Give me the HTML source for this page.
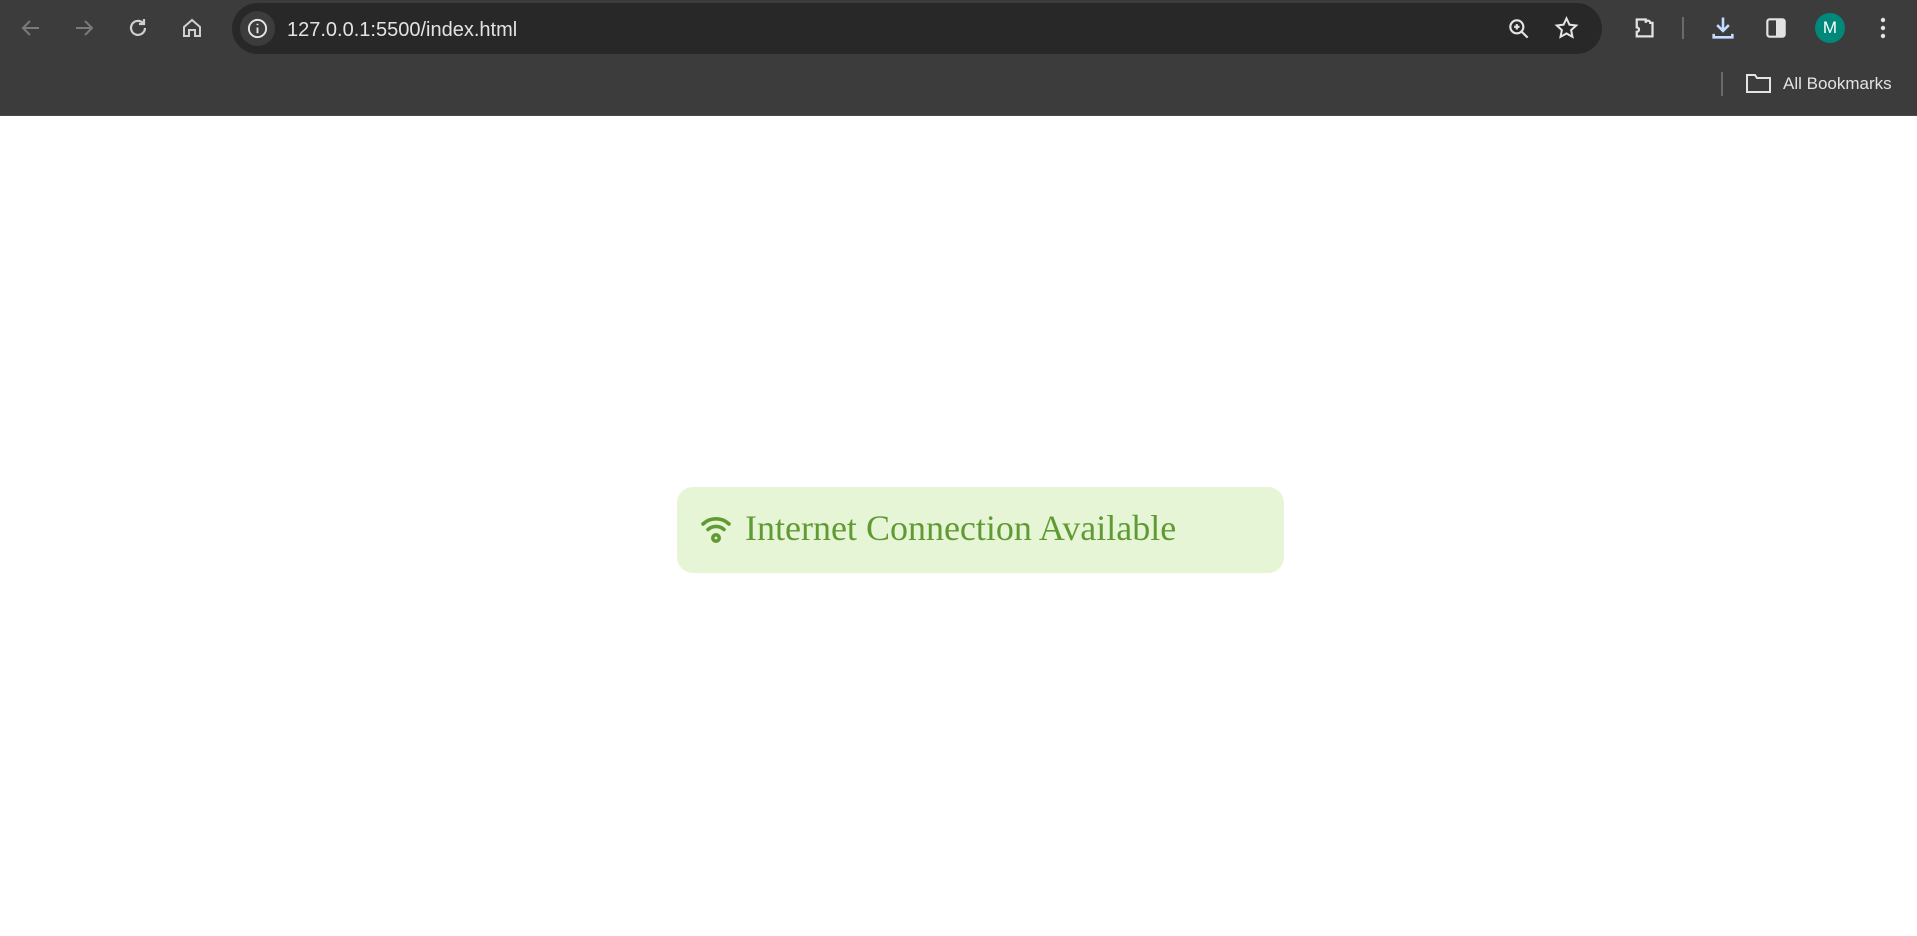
<!DOCTYPE html>
<html><head><meta charset="utf-8"><style>
html,body{margin:0;padding:0;width:1917px;height:936px;overflow:hidden;background:#fff;font-family:"Liberation Sans",sans-serif}
.chrome{position:absolute;left:0;top:0;width:1917px;height:116px;background:#3c3c3c;border-bottom:1px solid #4a4a4a;box-sizing:border-box}
.omni{position:absolute;left:232px;top:3px;width:1370px;height:51px;background:#282828;border-radius:26px}
.info{position:absolute;left:240px;top:11px;width:35px;height:35px;border-radius:50%;background:#3c3c3c}
.url{position:absolute;left:287px;top:19px;font-size:20px;color:#e3e3e3}
.ico{position:absolute}
.bm{position:absolute;left:1783px;top:74px;font-size:17px;color:#e3e3e3}
.box{position:absolute;left:677px;top:487px;width:607px;height:86px;background:#e7f5d7;border-radius:16px}
.txt{position:absolute;left:745px;top:507px;font-family:"Liberation Serif",serif;font-size:36px;color:#5f9b32;white-space:nowrap}
</style></head><body>
<div class="chrome">
<svg class="ico" style="left:19px;top:16px" width="24" height="24" viewBox="0 0 24 24" fill="none" stroke="#7a7a7a" stroke-width="2"><path d="M20 12H5M11 5l-7 7 7 7"/></svg>
<svg class="ico" style="left:72px;top:16px" width="24" height="24" viewBox="0 0 24 24" fill="none" stroke="#7a7a7a" stroke-width="2"><path d="M4 12h15M13 5l7 7-7 7"/></svg>
<svg class="ico" style="left:126px;top:16px" width="24" height="24" viewBox="0 0 24 24" fill="none" stroke="#d0d0d0" stroke-width="2.2"><path d="M19 12a7 7 0 1 1-2-5"/><path d="M18 3v5h-5" /></svg>
<svg class="ico" style="left:180px;top:16px" width="24" height="24" viewBox="0 0 24 24" fill="none" stroke="#d0d0d0" stroke-width="2"><path d="M4 11l8-7 8 7v9h-5v-6H9v6H4z"/></svg>
<div class="omni"></div>
<div class="info"></div>
<svg class="ico" style="left:246px;top:17px" width="23" height="23" viewBox="0 0 24 24" fill="none" stroke="#e3e3e3" stroke-width="2"><circle cx="12" cy="12" r="9"/><path d="M12 11v6M12 7v1.5"/></svg>
<div class="url">127.0.0.1:5500/index.html</div>
<svg class="ico" style="left:1506px;top:16px" width="26" height="26" viewBox="0 0 24 24" fill="none" stroke="#e3e3e3" stroke-width="2"><circle cx="10" cy="10" r="6"/><path d="M14.5 14.5L20 20M10 7.5v5M7.5 10h5"/></svg>
<svg class="ico" style="left:1553px;top:15px" width="27" height="27" viewBox="0 0 24 24" fill="none" stroke="#e3e3e3" stroke-width="1.8"><path d="M12 3l2.6 5.6 6 .7-4.5 4.1 1.2 6L12 16.4 6.7 19.4l1.2-6L3.4 9.3l6-.7z"/></svg>
<svg class="ico" style="left:1630px;top:15px" width="27" height="27" viewBox="0 0 24 24" fill="none" stroke="#e3e3e3" stroke-width="2"><path d="M5 4h9v3a2 2 0 0 1 4 0v0h2v12H6v-4a2 2 0 0 0 0-4V4z"/></svg>
<div style="position:absolute;left:1682px;top:17px;width:2px;height:22px;background:#6a6a6a"></div>
<svg class="ico" style="left:1709px;top:14px" width="28" height="28" viewBox="0 0 24 24" fill="none" stroke="#c4dcff" stroke-width="2.2"><path d="M12 3v11M7 9.5l5 5 5-5M4 17v3h16v-3"/></svg>
<svg class="ico" style="left:1763px;top:15px" width="26" height="26" viewBox="0 0 24 24"><rect x="4" y="4" width="16" height="16" rx="2" fill="none" stroke="#e3e3e3" stroke-width="2"/><rect x="12" y="4" width="8" height="16" fill="#e3e3e3"/></svg>
<div style="position:absolute;left:1815px;top:13px;width:30px;height:30px;border-radius:50%;background:#00897b;color:#fff;font-size:17px;line-height:30px;text-align:center">M</div>
<svg class="ico" style="left:1873px;top:16px" width="20" height="24" viewBox="0 0 20 24" fill="#e3e3e3"><circle cx="10" cy="4" r="2.2"/><circle cx="10" cy="12" r="2.2"/><circle cx="10" cy="20" r="2.2"/></svg>
<div style="position:absolute;left:1721px;top:72px;width:2px;height:24px;background:#6a6a6a"></div>
<svg class="ico" style="left:1745px;top:71px" width="27" height="24" viewBox="0 0 27 24" fill="none" stroke="#e3e3e3" stroke-width="2"><path d="M2 4h8l2 3h13v14H2z"/></svg>
<div class="bm">All Bookmarks</div>
</div>
<div class="box"></div>
<svg class="ico" style="left:700px;top:514px" width="32" height="30" viewBox="0 0 32 30" fill="none" stroke="#5f9b32" stroke-width="3.6" stroke-linecap="round"><path d="M3 10a19 19 0 0 1 26 0"/><path d="M8 15.5a12 12 0 0 1 16 0"/><circle cx="16" cy="24" r="3.2"/></svg>
<div class="txt">Internet Connection Available</div>
</body></html>
